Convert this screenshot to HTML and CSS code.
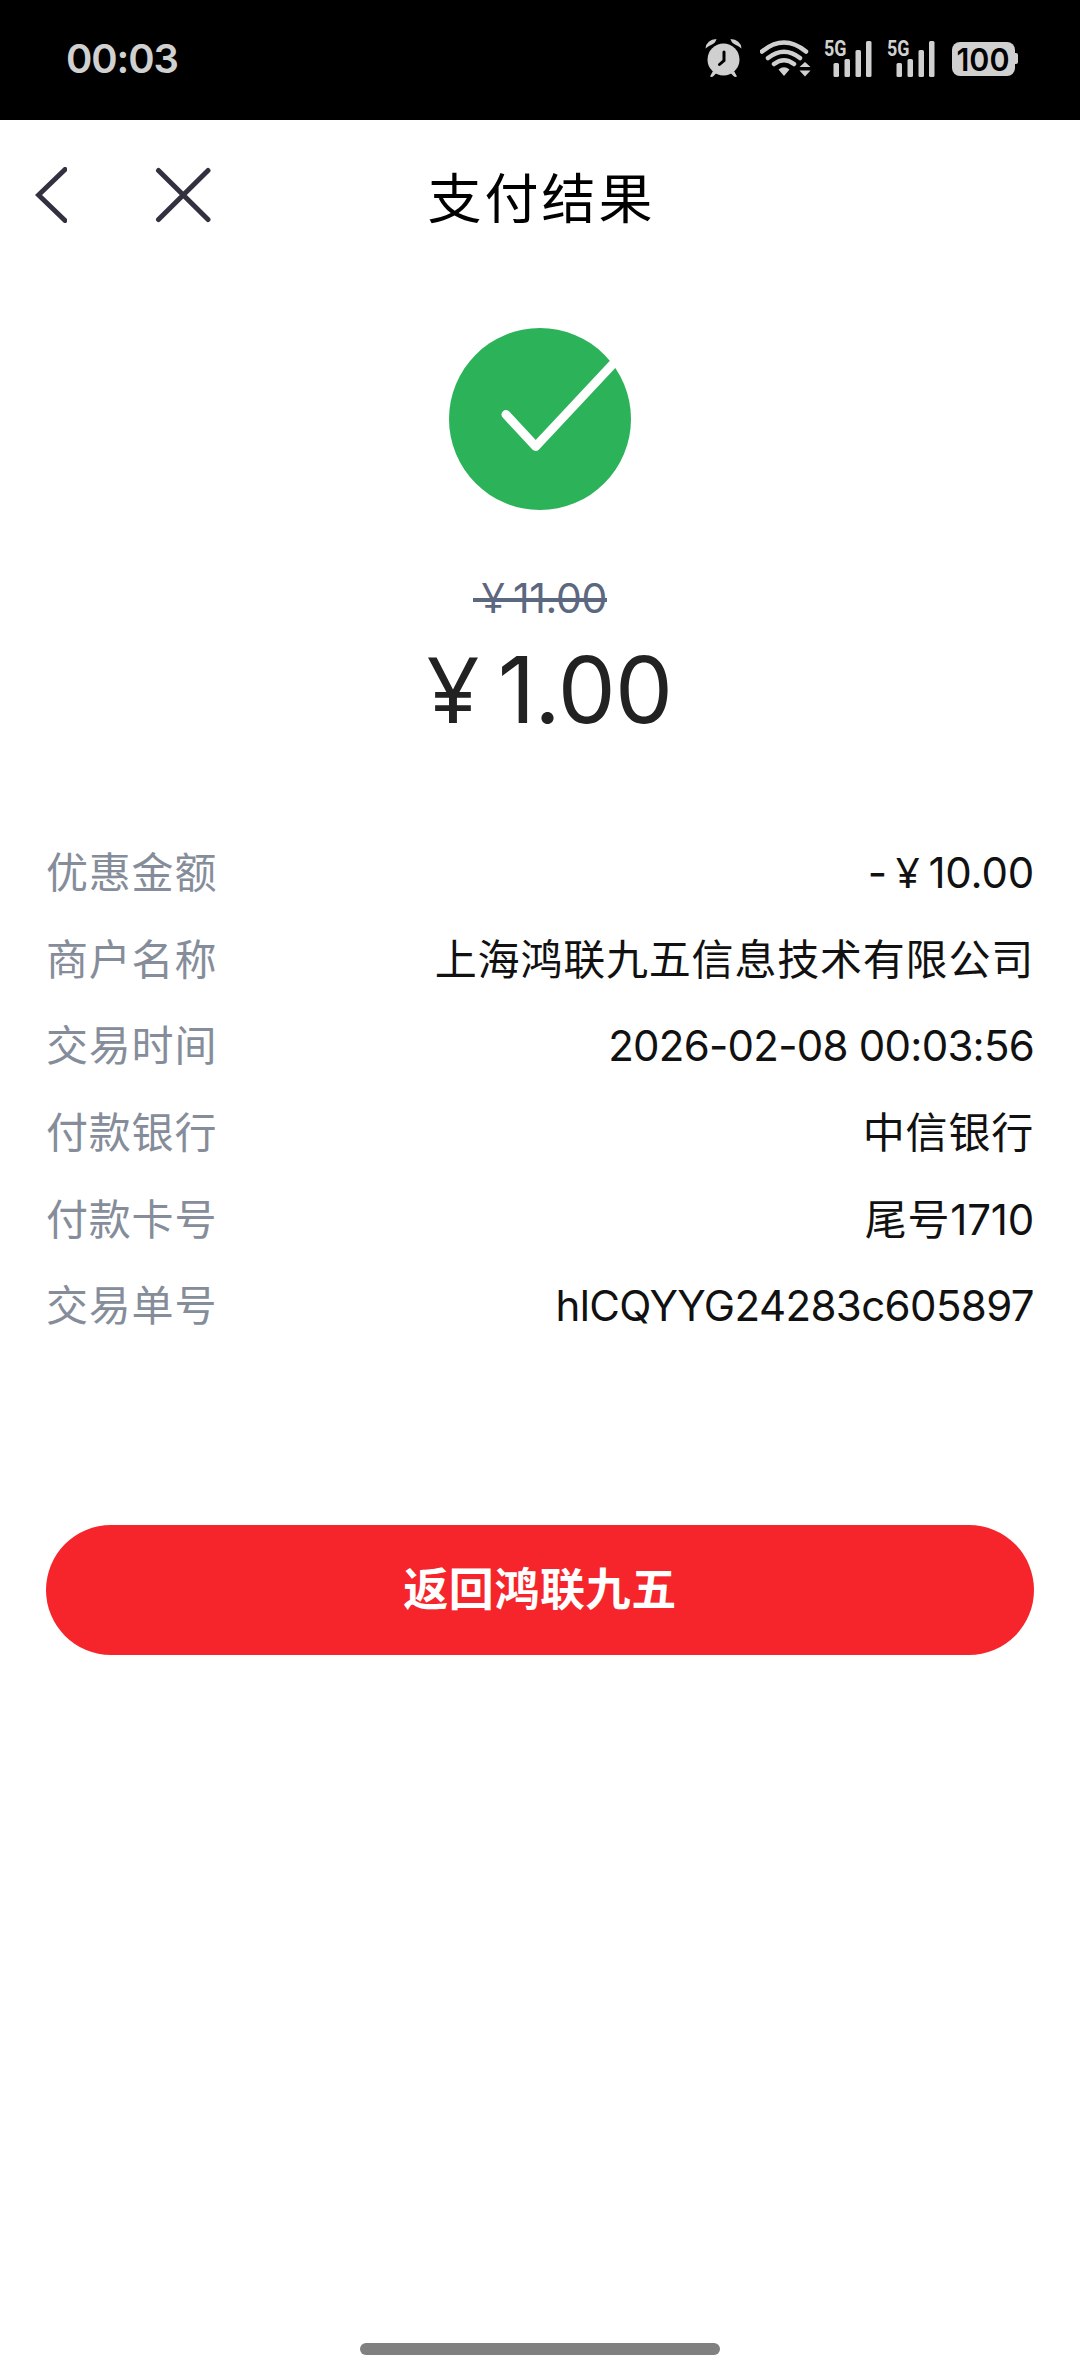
FILE: index.html
```html
<!DOCTYPE html>
<html lang="zh-CN">
<head>
<meta charset="utf-8">
<title>支付结果</title>
<link rel="stylesheet" href="styles.css">
</head>
<body>
<div class="status">
  <span class="clock">00:03</span>
  <div class="status-icons">
    <svg class="alarm" width="38" height="40" viewBox="705 40 38 40">
      <circle cx="723.5" cy="60.500" r="16"/>
      <path d="M705.500 49.500q1-9 11-9.500q-1 4-4.500 5.500q-3.500 1.500-6.500 4zM741.500 49.500q-1-9-11-9.500q1 4 4.500 5.500q3.500 1.500 6.500 4zM713 72l-3 5.500q2 1 3.500-.5l3-3zM734 72l3 5.500q-2 1-3.500-.5l-3-3z"/>
      <path class="hands" d="M724 53v8.500l-4.500 4"/>
    </svg>
    <svg class="wifi" width="52" height="38" viewBox="760 40 52 38">
      <path class="arc" d="M762 51.500q22-18 44 0M768 58q16-12.500 32 0M774 64q10-7.500 20 0"/>
      <path d="M778.500 69.500q5.500-4.500 11 0l-5.500 6.500zM799.500 67h11l-5.500-5zM799.500 70.500h11l-5.500 6z"/>
    </svg>
    <svg class="signal" width="49" height="46" viewBox="824 36 49 46">
      <text x="824" y="56" textLength="22.500" lengthAdjust="spacingAndGlyphs">5G</text>
      <rect x="833.500" y="63" width="5.500" height="14" rx="1.500"/>
      <rect x="844.500" y="59" width="5.500" height="18" rx="1.500"/>
      <rect x="855.500" y="50" width="5.500" height="27" rx="1.500"/>
      <rect x="866" y="41" width="5.500" height="36" rx="1.500"/>
    </svg>
    <svg class="signal" width="49" height="46" viewBox="824 36 49 46">
      <text x="824" y="56" textLength="22.500" lengthAdjust="spacingAndGlyphs">5G</text>
      <rect x="833.500" y="63" width="5.500" height="14" rx="1.500"/>
      <rect x="844.500" y="59" width="5.500" height="18" rx="1.500"/>
      <rect x="855.500" y="50" width="5.500" height="27" rx="1.500"/>
      <rect x="866" y="41" width="5.500" height="36" rx="1.500"/>
    </svg>
    <svg class="battery" width="67" height="36" viewBox="952 42 67 36">
      <rect x="952" y="43" width="63" height="34" rx="8"/>
      <path d="M1014 54h2q2 0 2 2v7q0 2-2 2h-2z"/>
      <text x="956.500" y="71.500" textLength="53" lengthAdjust="spacingAndGlyphs">100</text>
    </svg>
  </div>
</div>

<header class="nav">
  <div class="nav-side">
    <svg width="32" height="56" viewBox="35 167 32 56"><path d="M65 169.500L38.500 195L65 220.500"/></svg>
    <svg width="56" height="56" viewBox="155 167 56 56"><path d="M158.500 170.500L208 219.500M208 170.500L158.500 219.500"/></svg>
  </div>
  <h1>支付结果</h1>
  <div class="nav-side"></div>
</header>

<main>
  <section class="result">
    <svg width="184" height="184" viewBox="448 327 184 184">
      <circle cx="540" cy="419" r="91"/>
      <path d="M506 414.500L535.700 446.500L619 357.500"/>
    </svg>
    <div class="old-price"><span class="yen">&nbsp;¥&nbsp;</span>11.00</div>
    <div class="price"><span class="yen">&nbsp;¥&nbsp;</span>1.00</div>
  </section>

  <dl class="details">
    <div><dt>优惠金额</dt><dd class="amount">-<span class="yen">&nbsp;¥&nbsp;</span>10.00</dd></div>
    <div><dt>商户名称</dt><dd>上海鸿联九五信息技术有限公司</dd></div>
    <div><dt>交易时间</dt><dd class="time">2026-02-08 00:03:56</dd></div>
    <div><dt>付款银行</dt><dd>中信银行</dd></div>
    <div><dt>付款卡号</dt><dd>尾号<span class="digits">1710</span></dd></div>
    <div><dt>交易单号</dt><dd class="order">hlCQYYG24283c605897</dd></div>
  </dl>

  <button class="back-button" type="button">返回鸿联九五</button>
</main>

<div class="home-indicator"></div>
</body>
</html>
```

FILE: styles.css
```css
* { box-sizing: border-box; }

body {
  margin: 0;
  min-height: 2376px;
  display: flex;
  flex-direction: column;
  background: #fff;
  color: #111;
  font-family: Inter, "Noto Sans CJK SC", sans-serif;
}

svg { display: block; flex: none; }

.status {
  height: 120px;
  padding: 0 61px 2px 66px;
  display: flex;
  align-items: center;
  justify-content: space-between;
  background: #000;
  color: #d0d0d0;
}
.clock { font-size: 40px; font-weight: 600; line-height: 48px; letter-spacing: -1.1px; }
.status-icons { display: flex; align-items: center; fill: #d0d0d0; }
.wifi { margin-left: 17px; }
.signal { margin-left: 12px; }
.signal + .signal { margin-left: 14px; }
.battery { margin-left: 16px; }
.hands { fill: none; stroke: #000; stroke-width: 3; stroke-linecap: round; }
.arc { fill: none; stroke: #d0d0d0; stroke-width: 4.5; stroke-linecap: round; }
.signal text { font: 700 22px Roboto, sans-serif; }
.battery text { font: 600 31px Inter, sans-serif; fill: #000; }

.nav {
  height: 150px;
  padding: 0 35px;
  display: grid;
  grid-template-columns: 1fr auto 1fr;
  align-items: center;
}
.nav-side { display: flex; gap: 88px; }
.nav-side path { fill: none; stroke: #33313f; stroke-width: 5; stroke-linecap: round; }
h1 {
  margin: 9px 0 0 3px;
  font-size: 54px;
  font-weight: 400;
  line-height: 80px;
  letter-spacing: 3px;
  color: #000;
}

main { padding: 57px 46px 0; }
.result { display: flex; flex-direction: column; align-items: center; }
.result circle { fill: #2cb35a; }
.result path { fill: none; stroke: #fff; stroke-width: 9; stroke-linecap: round; stroke-linejoin: round; }
.yen { font-family: "Noto Sans", sans-serif; line-height: 0; word-spacing: -0.045em; }
.old-price {
  margin-top: 55px;
  font-size: 41px;
  line-height: 64px;
  font-weight: 400;
  letter-spacing: -0.4px;
  color: #5c6780;
  background: linear-gradient(#5c6780, #5c6780) 0 32px / 100% 4px no-repeat;
}
.price {
  margin-top: 5px;
  font-size: 92px;
  line-height: 110px;
  letter-spacing: -0.8px;
  color: #222;
}

.details { margin: 85px 0 0; }
.details > div {
  height: 86.6px;
  display: flex;
  align-items: center;
  justify-content: space-between;
  font-size: 42px;
  line-height: 60px;
}
dt { color: #868d9a; letter-spacing: 0.8px; }
dd { margin: 0; letter-spacing: 0.8px; }
.amount, .digits { letter-spacing: -0.2px; }
.time { letter-spacing: -0.75px; }
.order { letter-spacing: -0.6px; }

.back-button {
  width: 100%;
  height: 130px;
  margin-top: 175px;
  padding: 0 0 5px;
  border: 0;
  border-radius: 65px;
  background: #f5252b;
  color: #fff;
  font: 700 45px/60px "Noto Sans CJK SC", sans-serif;
  letter-spacing: 0.6px;
}

.home-indicator {
  width: 360px;
  height: 12px;
  margin: auto auto 21px;
  border-radius: 6px;
  background: #808080;
}
```
